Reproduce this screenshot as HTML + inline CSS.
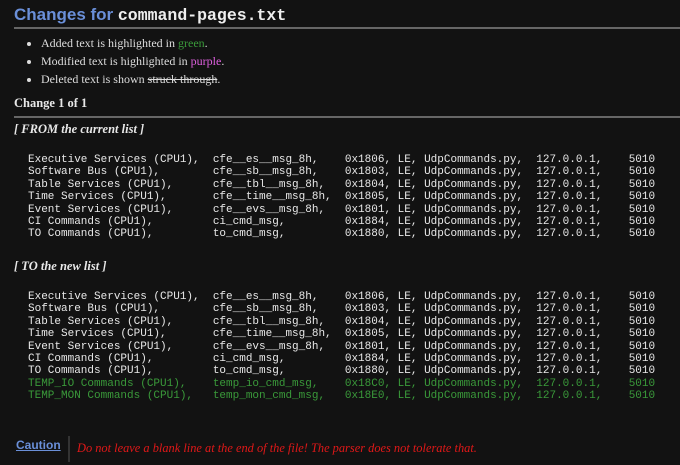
<!DOCTYPE html>
<html><head><meta charset="utf-8"><style>
body{margin:0;background:#121212;color:#e8e8e8;width:680px;height:465px;overflow:hidden;position:relative;font-family:"Liberation Serif",serif;}
.a{position:absolute;white-space:nowrap;}
h1{position:absolute;left:14px;top:5px;margin:0;font:bold 17px "Liberation Sans",sans-serif;color:#6a8fd8;}
h1 code{font-family:"Liberation Mono",monospace;font-weight:bold;color:#eee;font-size:16.5px;}
.hr{position:absolute;left:14px;right:0;height:2px;background:#666;}
ul{position:absolute;left:14px;top:34px;margin:0;padding-left:27px;font-size:12px;line-height:18px;}
li{color:#ddd}
.b{font-weight:bold;font-size:12.5px;}
.i{font-style:italic;font-weight:bold;font-size:12.5px;}
pre{position:absolute;left:28px;margin:0;font:11px/12.4px "Liberation Mono",monospace;color:#e8e8e8;}
.g{color:#3a9a3a}
</style></head><body>
<h1>Changes for <code>command-pages.txt</code></h1>
<div class="hr" style="top:27px"></div>
<ul><li>Added text is highlighted in <span style="color:#3a9a3a">green</span>.</li>
<li>Modified text is highlighted in <span style="color:#e060e0">purple</span>.</li>
<li>Deleted text is shown <s>struck through</s>.</li></ul>
<div class="a b" style="left:14px;top:96px">Change 1 of 1</div>
<div class="hr" style="top:116px"></div>
<div class="a i" style="left:14px;top:122px">[ FROM the current list ]</div>
<pre style="top:154px">Executive Services (CPU1),  cfe__es__msg_8h,    0x1806, LE, UdpCommands.py,  127.0.0.1,    5010
Software Bus (CPU1),        cfe__sb__msg_8h,    0x1803, LE, UdpCommands.py,  127.0.0.1,    5010
Table Services (CPU1),      cfe__tbl__msg_8h,   0x1804, LE, UdpCommands.py,  127.0.0.1,    5010
Time Services (CPU1),       cfe__time__msg_8h,  0x1805, LE, UdpCommands.py,  127.0.0.1,    5010
Event Services (CPU1),      cfe__evs__msg_8h,   0x1801, LE, UdpCommands.py,  127.0.0.1,    5010
CI Commands (CPU1),         ci_cmd_msg,         0x1884, LE, UdpCommands.py,  127.0.0.1,    5010
TO Commands (CPU1),         to_cmd_msg,         0x1880, LE, UdpCommands.py,  127.0.0.1,    5010</pre>
<div class="a i" style="left:14px;top:259px">[ TO the new list ]</div>
<pre style="top:291px">Executive Services (CPU1),  cfe__es__msg_8h,    0x1806, LE, UdpCommands.py,  127.0.0.1,    5010
Software Bus (CPU1),        cfe__sb__msg_8h,    0x1803, LE, UdpCommands.py,  127.0.0.1,    5010
Table Services (CPU1),      cfe__tbl__msg_8h,   0x1804, LE, UdpCommands.py,  127.0.0.1,    5010
Time Services (CPU1),       cfe__time__msg_8h,  0x1805, LE, UdpCommands.py,  127.0.0.1,    5010
Event Services (CPU1),      cfe__evs__msg_8h,   0x1801, LE, UdpCommands.py,  127.0.0.1,    5010
CI Commands (CPU1),         ci_cmd_msg,         0x1884, LE, UdpCommands.py,  127.0.0.1,    5010
TO Commands (CPU1),         to_cmd_msg,         0x1880, LE, UdpCommands.py,  127.0.0.1,    5010
<span class="g">TEMP_IO Commands (CPU1),    temp_io_cmd_msg,    0x18C0, LE, UdpCommands.py,  127.0.0.1,    5010
TEMP_MON Commands (CPU1),   temp_mon_cmd_msg,   0x18E0, LE, UdpCommands.py,  127.0.0.1,    5010</span></pre>
<div class="a" style="left:16px;top:438px;font:bold 12px 'Liberation Sans',sans-serif;color:#6a8fd8;text-decoration:underline">Caution</div>
<div class="a" style="left:68px;top:436px;width:2px;height:26px;background:#333"></div>
<div class="a" style="left:77px;top:441px;font-style:italic;font-size:12.4px;color:#e01818">Do not leave a blank line at the end of the file! The parser does not tolerate that.</div>
</body></html>
